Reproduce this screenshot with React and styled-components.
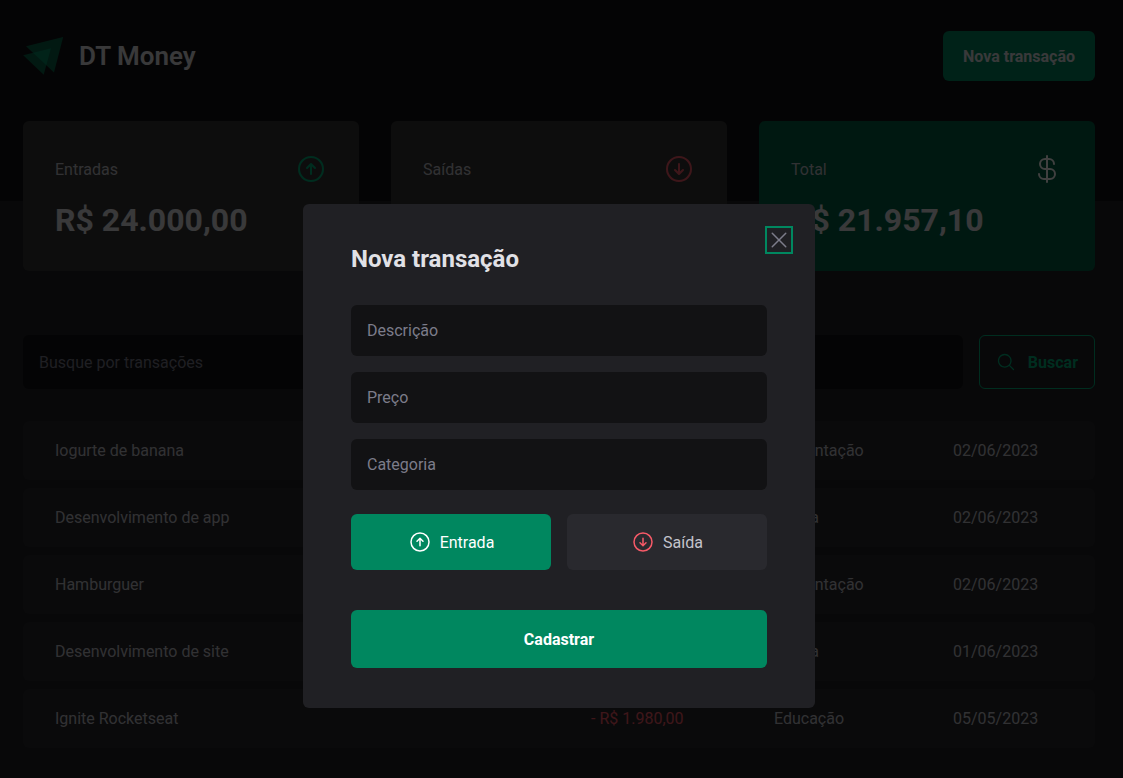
import React from "react";
import styled, { createGlobalStyle } from "styled-components";
import {
  PiArrowCircleUp,
  PiArrowCircleDown,
  PiCurrencyDollar,
  PiMagnifyingGlass,
  PiX,
} from "react-icons/pi";

const colors = {
  white: "#ffffff",
  gray100: "#e1e1e6",
  gray300: "#c4c4cc",
  gray500: "#7c7c8a",
  gray600: "#363636",
  gray700: "#29292e",
  gray800: "#202024",
  gray900: "#121214",
  green300: "#00b37e",
  green500: "#00875f",
  green700: "#015f43",
  red300: "#f75a68",
};

const GlobalStyle = createGlobalStyle`
  * { margin: 0; padding: 0; box-sizing: border-box; }
  html, body { background: ${colors.gray800}; }
  body {
    color: ${colors.gray300};
    overflow: hidden;
    -webkit-font-smoothing: antialiased;
  }
  body, input, textarea, button {
    font-family: Roboto, "Liberation Sans", sans-serif;
    font-weight: 400;
    font-size: 16px;
  }
`;

const Container = styled.div`
  width: 100%;
  max-width: 1124px;
  margin: 0 auto;
  padding: 0 28px 0 23px;
`;

const Header = styled.header`
  background: ${colors.gray900};
  padding: 31px 0 120px;
`;

const HeaderContent = styled(Container)`
  display: flex;
  justify-content: space-between;
  align-items: center;
`;

const Brand = styled.div`
  display: flex;
  align-items: center;
  gap: 16px;
  color: ${colors.gray100};
  font-size: 26px;
  font-weight: 600;
`;

const NewTransactionButton = styled.button`
  height: 50px;
  border: 0;
  border-radius: 6px;
  padding: 0 20px;
  background: ${colors.green500};
  color: ${colors.gray100};
  font-weight: 700;
`;

const Summary = styled(Container).attrs({ as: "section" })`
  display: grid;
  grid-template-columns: repeat(3, 1fr);
  gap: 32px;
  margin-top: -80px;
`;

const Card = styled.div`
  background: ${(p) => (p.$highlight ? colors.green700 : colors.gray600)};
  border-radius: 6px;
  padding: 32px;
  height: 150px;

  header {
    display: flex;
    align-items: center;
    justify-content: space-between;
    color: ${colors.gray300};
  }

  strong {
    display: block;
    margin-top: 16px;
    font-size: 32px;
    line-height: 38px;
    color: ${colors.gray100};
  }
`;

const Transactions = styled(Container).attrs({ as: "main" })`
  margin-top: 64px;
`;

const SearchForm = styled.form`
  display: flex;
  gap: 16px;

  input {
    flex: 1;
    min-width: 0;
    border: 0;
    border-radius: 6px;
    background: ${colors.gray900};
    color: ${colors.gray300};
    padding: 16px;
  }

  input::placeholder {
    color: ${colors.gray500};
  }

  button {
    display: flex;
    align-items: center;
    gap: 12px;
    height: 54px;
    padding: 0 16px;
    border: 1px solid ${colors.green300};
    border-radius: 6px;
    background: transparent;
    color: ${colors.green300};
    font-weight: 700;
  }
`;

const Table = styled.table`
  width: 100%;
  table-layout: fixed;
  border-collapse: separate;
  border-spacing: 0 8px;
  margin-top: 24px;

  td {
    padding: 20px 32px;
    line-height: 19px;
    background: ${colors.gray700};
    white-space: nowrap;
  }

  td:first-child {
    width: 50%;
    border-radius: 6px 0 0 6px;
  }

  td:nth-child(2) {
    width: 183px;
  }

  td:nth-child(3) {
    width: 179px;
  }

  td:last-child {
    border-radius: 0 6px 6px 0;
  }
`;

const Price = styled.span`
  color: ${(p) => (p.$kind === "outcome" ? colors.red300 : colors.green300)};
`;

const Overlay = styled.div`
  position: fixed;
  inset: 0;
  display: flex;
  justify-content: center;
  align-items: flex-start;
  padding: 204px 5px 0 0;
  background: rgba(0, 0, 0, 0.75);
`;

const Dialog = styled.div`
  position: relative;
  width: 512px;
  padding: 40px 48px;
  border-radius: 6px;
  background: ${colors.gray800};

  h2 {
    font-size: 24px;
    line-height: 31px;
    font-weight: 700;
    color: ${colors.gray100};
  }
`;

const CloseButton = styled.button`
  position: absolute;
  top: 24px;
  right: 24px;
  border: 0;
  background: transparent;
  color: ${colors.gray500};
  line-height: 0;
  outline: 2px solid ${colors.green500};
`;

const Form = styled.form`
  display: flex;
  flex-direction: column;
  gap: 16px;
  margin-top: 30px;
`;

const Field = styled.input`
  height: 51px;
  border: 0;
  border-radius: 6px;
  padding: 16px;
  background: ${colors.gray900};
  color: ${colors.gray300};

  &::placeholder {
    color: ${colors.gray500};
  }
`;

const TypeOptions = styled.div`
  display: grid;
  grid-template-columns: repeat(2, 1fr);
  gap: 16px;
  margin-top: 8px;
`;

const TypeButton = styled.button`
  display: flex;
  align-items: center;
  justify-content: center;
  gap: 8px;
  height: 56px;
  border: 0;
  border-radius: 6px;
  background: ${(p) => (p.$active ? colors.green500 : colors.gray700)};
  color: ${(p) => (p.$active ? colors.white : colors.gray300)};

  svg {
    color: ${(p) => (p.$active ? colors.white : colors.red300)};
  }
`;

const SubmitButton = styled.button`
  height: 58px;
  margin-top: 24px;
  border: 0;
  border-radius: 6px;
  background: ${colors.green500};
  color: ${colors.white};
  font-weight: 700;
`;

const Logo = () => (
  <svg width="40" height="40" viewBox="0 0 40 40" fill={colors.green300} aria-hidden="true">
    <path d="M40.200 1 3 10.300 31 36.500Z" fillOpacity="0.5" />
    <path d="M28 12.200 0.200 19.300 20.700 38.700Z" fillOpacity="0.5" />
  </svg>
);

const transactions = [
  { id: 1, description: "Iogurte de banana", price: "- R$ 13,00", kind: "outcome", category: "Alimentação", date: "02/06/2023" },
  { id: 2, description: "Desenvolvimento de app", price: "R$ 12.000,00", kind: "income", category: "Venda", date: "02/06/2023" },
  { id: 3, description: "Hamburguer", price: "- R$ 49,90", kind: "outcome", category: "Alimentação", date: "02/06/2023" },
  { id: 4, description: "Desenvolvimento de site", price: "R$ 12.000,00", kind: "income", category: "Venda", date: "01/06/2023" },
  { id: 5, description: "Ignite Rocketseat", price: "- R$ 1.980,00", kind: "outcome", category: "Educação", date: "05/05/2023" },
];

export default function App() {
  return (
    <>
      <GlobalStyle />
      <Header>
        <HeaderContent>
          <Brand>
            <Logo />
            <span>DT Money</span>
          </Brand>
          <NewTransactionButton type="button">Nova transação</NewTransactionButton>
        </HeaderContent>
      </Header>

      <Summary>
        <Card>
          <header>
            <span>Entradas</span>
            <PiArrowCircleUp size={32} color={colors.green300} />
          </header>
          <strong>R$ 24.000,00</strong>
        </Card>
        <Card>
          <header>
            <span>Saídas</span>
            <PiArrowCircleDown size={32} color={colors.red300} />
          </header>
          <strong>R$ 2.042,90</strong>
        </Card>
        <Card $highlight>
          <header>
            <span>Total</span>
            <PiCurrencyDollar size={32} color={colors.white} />
          </header>
          <strong>R$ 21.957,10</strong>
        </Card>
      </Summary>

      <Transactions>
        <SearchForm>
          <input type="text" aria-label="Busque por transações" placeholder="Busque por transações" />
          <button type="button">
            <PiMagnifyingGlass size={20} />
            Buscar
          </button>
        </SearchForm>
        <Table>
          <tbody>
            {transactions.map((t) => (
              <tr key={t.id}>
                <td>{t.description}</td>
                <td>
                  <Price $kind={t.kind}>{t.price}</Price>
                </td>
                <td>{t.category}</td>
                <td>{t.date}</td>
              </tr>
            ))}
          </tbody>
        </Table>
      </Transactions>

      <Overlay>
        <Dialog role="dialog" aria-modal="true" aria-labelledby="dialog-title">
          <h2 id="dialog-title">Nova transação</h2>
          <CloseButton type="button" aria-label="Fechar">
            <PiX size={24} />
          </CloseButton>
          <Form>
            <Field type="text" aria-label="Descrição" placeholder="Descrição" />
            <Field type="text" aria-label="Preço" placeholder="Preço" />
            <Field type="text" aria-label="Categoria" placeholder="Categoria" />
            <TypeOptions>
              <TypeButton type="button" $active>
                <PiArrowCircleUp size={24} />
                Entrada
              </TypeButton>
              <TypeButton type="button">
                <PiArrowCircleDown size={24} />
                Saída
              </TypeButton>
            </TypeOptions>
            <SubmitButton type="button">Cadastrar</SubmitButton>
          </Form>
        </Dialog>
      </Overlay>
    </>
  );
}
